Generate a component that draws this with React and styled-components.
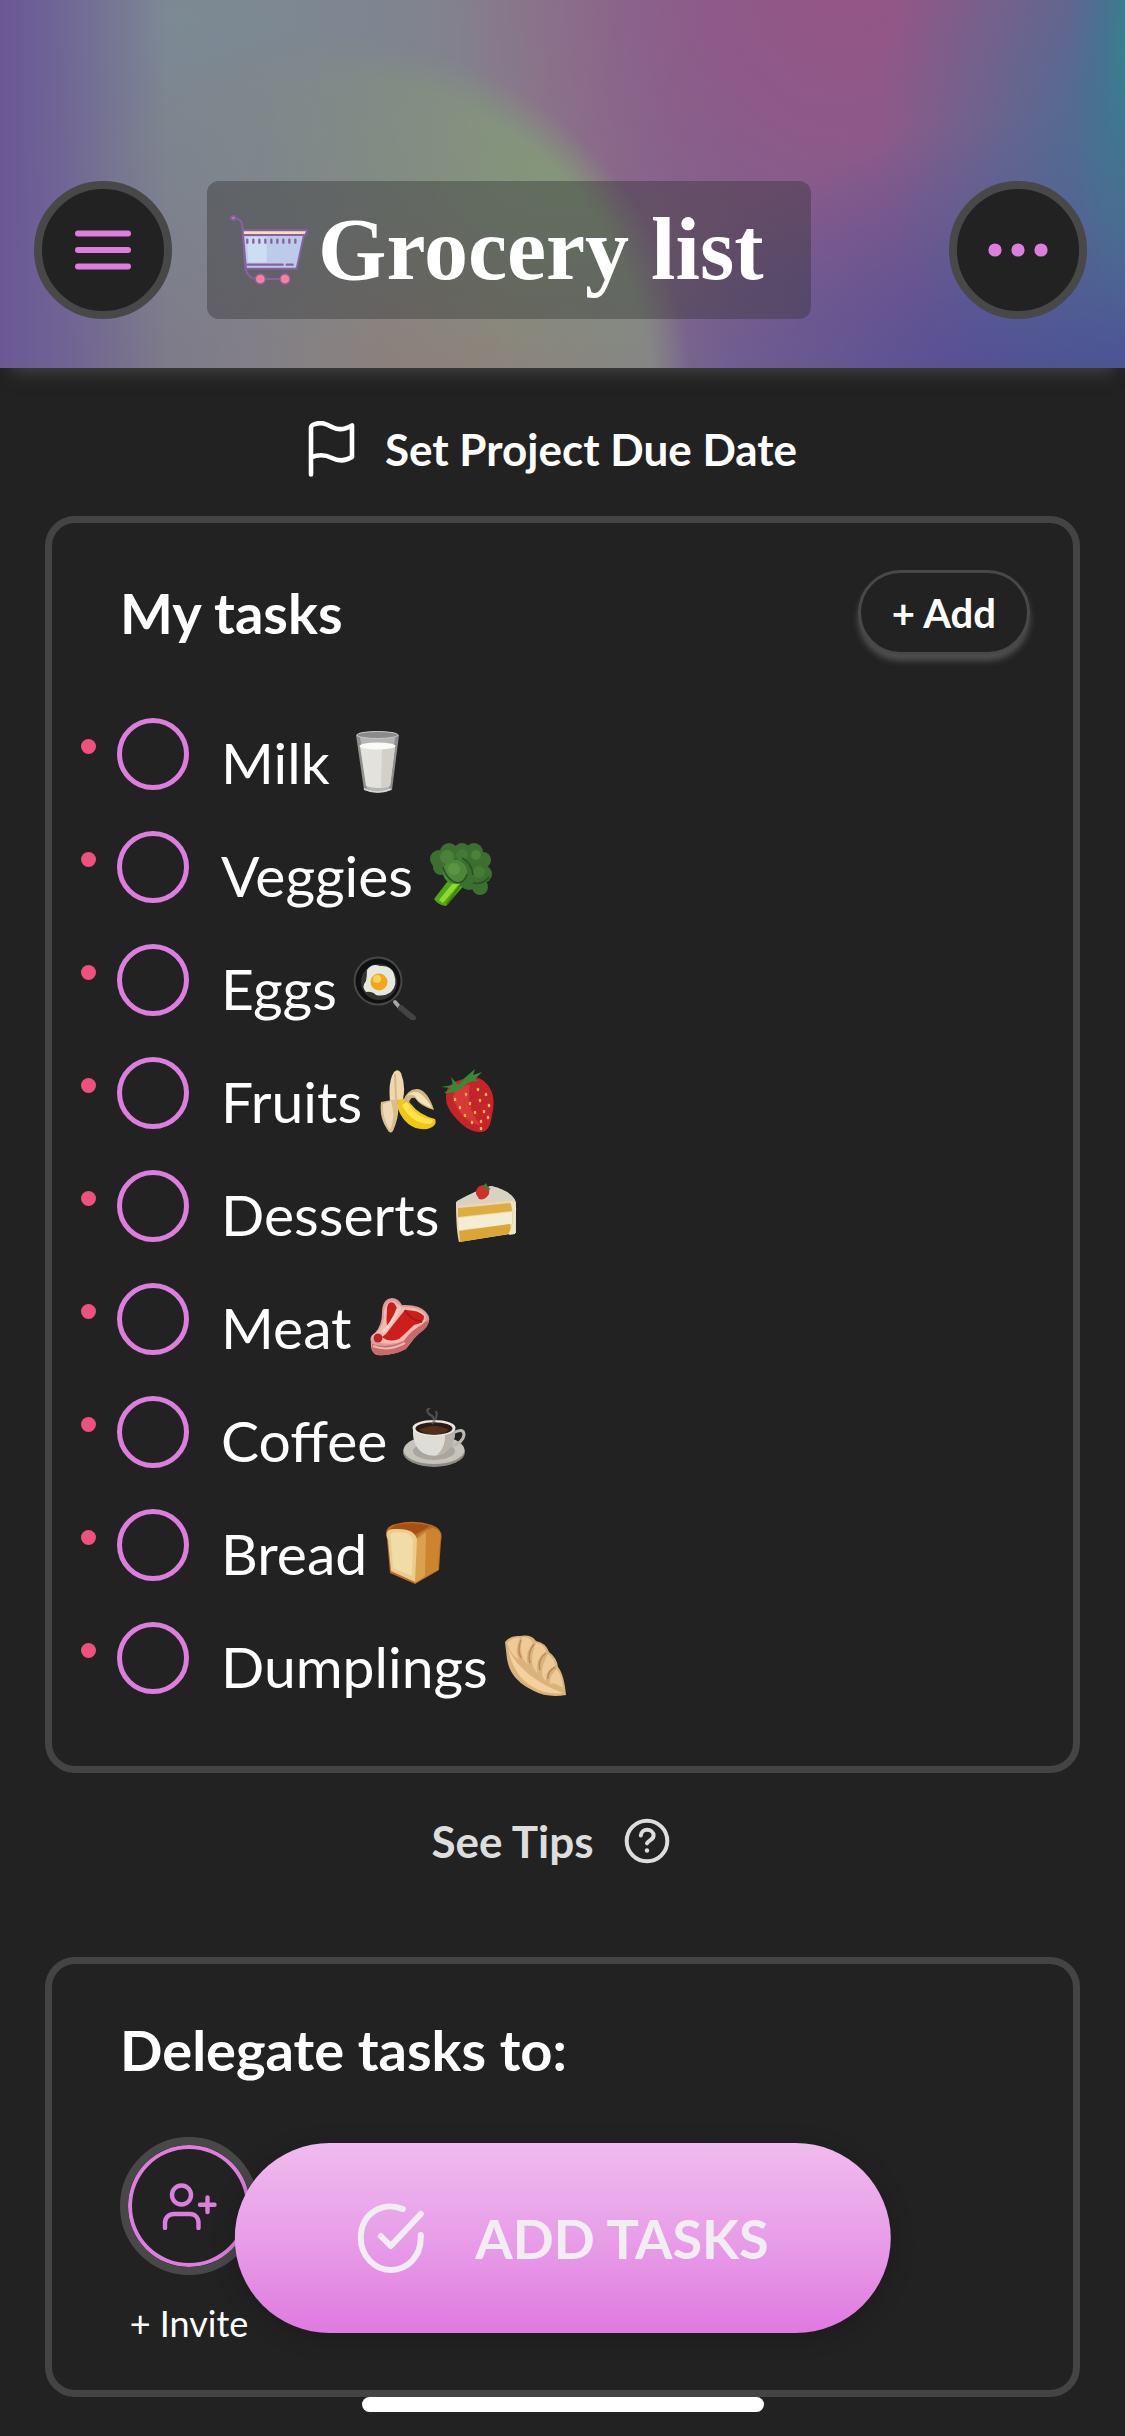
import React, { useState } from "react";
import styled, { createGlobalStyle } from "styled-components";

const GlobalStyle = createGlobalStyle`
  * {
    box-sizing: border-box;
  }
  body {
    margin: 0;
    background-color: #222222;
    color: #ffffff;
    font-family: Lato, "Open Sans", sans-serif;
  }
  h1, h2, ul {
    margin: 0;
    padding: 0;
  }
  button {
    font-family: inherit;
    color: inherit;
    cursor: pointer;
  }
`;
const Page = styled.div`
  min-height: 100vh;
  padding-bottom: 38px;
`;
const Header = styled.header`
  position: relative;
  display: flex;
  align-items: center;
  padding: 181px 38px 49px 34px;
  background-color: #7b6c90;
  background-image:
    linear-gradient(90deg, #6a5896 0%, rgba(108, 92, 150, 0.85) 4%, rgba(108, 96, 148, 0) 15%),
    radial-gradient(ellipse 5% 75% at 100% 12%, #38808e 0%, rgba(60, 120, 144, 0.6) 40%, rgba(76, 112, 146, 0) 100%),
    radial-gradient(ellipse 22% 90% at 100% 35%, rgba(70, 112, 146, 0.9) 0%, rgba(84, 106, 146, 0) 100%),
    radial-gradient(ellipse 45% 75% at 100% 105%, #4d4896 0%, rgba(88, 82, 146, 0) 100%),
    radial-gradient(ellipse 36% 120% at 76% -5%, #955585 0%, rgba(146, 88, 136, 0.85) 35%, rgba(140, 95, 140, 0) 100%),
    radial-gradient(ellipse 45% 90% at 16% 5%, #7c8a94 0%, rgba(128, 136, 144, 0) 100%),
    linear-gradient(90deg, #7a748e 0%, #80808a 28%, #8c7888 48%, #76648f 66%, #625f92 100%);
  box-shadow: 0 16px 16px -12px #444444;
`;
const Orb = styled.div`
  position: absolute;
  inset: 0;
  background-image:
    radial-gradient(ellipse 34% 60% at 50% 46%, #84967a 0%, rgba(132, 148, 124, 0) 100%),
    radial-gradient(ellipse 22% 45% at 36% 100%, #918274 0%, rgba(140, 132, 122, 0) 100%),
    linear-gradient(#82888a, #858486);
  mask-image: radial-gradient(circle at 29% 400px, #000000 325px, rgba(0, 0, 0, 0.5) 346px, transparent 366px),
    linear-gradient(78deg, transparent 8%, rgba(0, 0, 0, 0.4) 25%, #000000 44%);
  mask-composite: intersect;
`;
const RoundButton = styled.button`
  position: relative;
  display: flex;
  justify-content: center;
  align-items: center;
  flex: none;
  width: 138px;
  height: 138px;
  padding: 0;
  border: 8px solid #484848;
  border-radius: 50%;
  background-color: #222222;
  margin-left: ${(props) => (props.$end ? "auto" : "0")};
`;
const TitleBox = styled.div`
  position: relative;
  display: flex;
  align-items: center;
  gap: 10px;
  height: 138px;
  margin-left: 35px;
  padding: 0 47px 0 23px;
  border-radius: 12px;
  background-color: rgba(50, 50, 50, 0.4);
`;
const Title = styled.h1`
  font-family: "Liberation Serif", serif;
  font-size: 88px;
  font-weight: 700;
  line-height: 100px;
  white-space: nowrap;
`;
const LinkButton = styled.button`
  display: flex;
  justify-content: center;
  align-items: center;
  gap: 30px;
  width: 100%;
  height: ${(props) => props.$height};
  padding: ${(props) => props.$padding};
  border: none;
  background: none;
  color: ${(props) => props.$color};
  font-size: 44px;
  font-weight: 700;
`;
const Card = styled.section`
  margin: 0 45px;
  padding: ${(props) => props.$padding};
  border: 7px solid #444444;
  border-radius: 30px;
`;
const CardHeader = styled.div`
  display: flex;
  justify-content: space-between;
  align-items: center;
  padding: 0 43px 63px 68px;
`;
const CardTitle = styled.h2`
  font-size: 56px;
  font-weight: 700;
  line-height: 60px;
`;
const AddButton = styled.button`
  height: 85px;
  padding: 0 31px;
  border: 3px solid #484848;
  border-radius: 43px;
  background-color: #222222;
  box-shadow: 0 6px 6px #505050;
  font-size: 40px;
  font-weight: 700;
`;
const TaskList = styled.ul`
  list-style: none;
`;
const TaskRow = styled.li`
  display: flex;
  align-items: flex-start;
  height: 113px;
  padding-left: 29px;
`;
const Dot = styled.span`
  width: 15px;
  height: 15px;
  margin: 21px 21px 0 0;
  border-radius: 50%;
  background-color: #f0507e;
`;
const Check = styled.input`
  appearance: none;
  width: 72px;
  height: 72px;
  margin: 0 32px 0 0;
  border: 5px solid #dd7ddd;
  border-radius: 50%;
  cursor: pointer;
  &:checked {
    background-color: #dd7ddd;
  }
`;
const TaskLabel = styled.label`
  display: flex;
  align-items: center;
  gap: 16px;
  height: 72px;
  margin-top: 8px;
  font-size: 57px;
`;
const Emojis = styled.span`
  display: flex;
`;
const Person = styled.div`
  display: flex;
  flex-direction: column;
  align-items: center;
  gap: 28px;
  width: 138px;
  margin-top: 57px;
  font-size: 36px;
  line-height: 40px;
`;
const InviteButton = styled(RoundButton)`
  box-shadow: inset 0 0 0 4px #dd7ddd;
`;
const AddTasks = styled.button`
  position: fixed;
  bottom: 103px;
  left: 50%;
  transform: translateX(-50%);
  display: flex;
  align-items: center;
  gap: 51px;
  height: 190px;
  padding: 0 122px;
  border: none;
  border-radius: 95px;
  background-image: linear-gradient(#efbbee, #e89ee8 50%, #df7ae0);
  box-shadow: 0 4px 24px rgba(0, 0, 0, 0.2);
  color: #f0eef0;
  font-size: 54px;
  font-weight: 700;
  white-space: nowrap;
`;
const HomeBar = styled.div`
  position: fixed;
  bottom: 24px;
  left: 50%;
  transform: translateX(-50%);
  width: 402px;
  height: 15px;
  border-radius: 8px;
  background-color: #ffffff;
`;

const MenuIcon = () => (
  <svg width="56" height="40" viewBox="0 0 56 40" stroke="#dd7ddd" strokeWidth="6" strokeLinecap="round">
    <path d="M3 3.500h50M3 20h50M3 36.500h50" />
  </svg>
);
const MoreIcon = () => (
  <svg width="60" height="14" viewBox="0 0 60 14" fill="#dd7ddd">
    <circle cx="7" cy="7" r="6.600" />
    <circle cx="30" cy="7" r="6.600" />
    <circle cx="53" cy="7" r="6.600" />
  </svg>
);
const FlagIcon = () => (
  <svg width="47" height="56" viewBox="0 0 47 56" fill="none" stroke="#ffffff" strokeWidth="4.600" strokeLinecap="round" strokeLinejoin="round">
    <path d="M3 53.500V7C3 5 4 4 6 3.400C15 0 20 4 25 6.500C31 9.500 37 8.500 44 4.500V36C36 41 30 40 24 37C18 34 12 32.500 3 36.500" />
  </svg>
);
const HelpIcon = () => (
  <svg width="46" height="46" viewBox="0 0 46 46" fill="none" stroke="#dddddd" strokeWidth="4" strokeLinecap="round">
    <circle cx="23" cy="23" r="20.300" />
    <path d="M16.800 17.500C17.200 13.800 20 11.800 23 11.800C26.600 11.800 29.600 14.200 29.600 17.500C29.600 21.800 25 21.800 23 25.300" />
    <circle cx="23" cy="32.500" r="2.200" fill="#dddddd" stroke="none" />
  </svg>
);
const UserPlusIcon = () => (
  <svg width="56" height="48" viewBox="0 0 56 48" fill="none" stroke="#dd7ddd" strokeWidth="4.400" strokeLinecap="round">
    <circle cx="20.500" cy="13" r="9.500" />
    <path d="M4 46V41C4 35.500 8 32 13 32H29C34 32 37.500 35.500 37.500 41V46M46.500 15.500V30M39 22.700H53.500" />
  </svg>
);
const CheckCircleIcon = () => (
  <svg width="68" height="72" viewBox="0 0 68 72" fill="none" stroke="#f0eef0" strokeWidth="6" strokeLinecap="round" strokeLinejoin="round">
    <path d="M46 7C28 -1 4 10 4 36C4 54 18 68 34 68C51 68 64 54 64 36V33M24 34L34 44L64 12" />
  </svg>
);
const CartIcon = () => (
  <svg width="78" height="72" viewBox="90 130 234 214" fill="none" stroke="#87629f" strokeWidth="6" strokeLinejoin="round" role="img" aria-label="shopping cart">
    <path d="M102 141C122 142 127 154 128 176L136 292C140 312 154 324 170 324H254" />
    <path d="M129 192L138 293H290L312 192Z" fill="#bccbea" />
    <path d="M140 198L145 274H200V198Z" fill="#cdddf3" stroke="none" />
    <path d="M128 178H322L316 192H129Z" fill="#fbdcc0" />
    <path d="M142 206v9M160 206v9M178 206v9M196 206v9M214 206v9M232 206v9M250 206v9M268 206v9M286 206v9M142 281h106M260 281h18" strokeWidth="7" strokeLinecap="round" />
    <circle cx="100" cy="141" r="6" fill="#e878b4" />
    <circle cx="181" cy="324" r="15" fill="#ff7d9a" strokeWidth="4" />
    <circle cx="255" cy="324" r="15" fill="#ff7d9a" strokeWidth="4" />
  </svg>
);

const drawings = {
  milk: (
    <>
      <path d="M10 5L18 60Q32 66 46 60L53 5Q32 -1 10 5Z" fill="#8f8f90" />
      <path d="M14 7L21 59Q32 63 43 59L49 7Z" fill="#b5b5b5" />
      <path d="M14 16L20 56Q32 60 44 56L49 16Z" fill="#e4e2dc" />
      <path d="M36 18L35 57Q40 57 44 56L49 17Z" fill="#d3d0c9" />
      <ellipse cx="31.500" cy="16" rx="18" ry="3.500" fill="#fafaf7" />
      <ellipse cx="31.500" cy="5" rx="20.500" ry="3.500" fill="#8b8b8d" stroke="#c9c9c9" />
      <path d="M18 59Q32 65 45 59" stroke="#d8d8d8" strokeWidth="1.500" fill="none" />
    </>
  ),
  broccoli: (
    <>
      <path d="M22 34L5 56Q9 62 17 63L38 39L44 30Z" fill="#56a417" />
      <path d="M24 40L10 57L14 60L31 40Z" fill="#8ddb2c" />
      <path d="M33 40L18 61" stroke="#3d8014" strokeWidth="2" />
      <g fill="#3d6f30">
        <circle cx="10" cy="16" r="9" />
        <circle cx="20" cy="9" r="9" />
        <circle cx="33" cy="8" r="8" />
        <circle cx="45" cy="9" r="9" />
        <circle cx="54" cy="17" r="8" />
        <circle cx="54" cy="31" r="9" />
        <circle cx="51" cy="44" r="8" />
        <circle cx="40" cy="37" r="10" />
        <circle cx="12" cy="24" r="8" />
        <circle cx="32" cy="20" r="12" />
      </g>
      <circle cx="44" cy="20" r="11" fill="#3c6e2e" />
      <circle cx="26" cy="29" r="12" fill="#4d883a" />
      <circle cx="18" cy="14" r="7" fill="#4b8239" />
      <circle cx="33" cy="12" r="6" fill="#447935" />
      <circle cx="50" cy="29" r="6" fill="#457b36" />
      <circle cx="47" cy="12" r="5" fill="#4b8239" />
      <circle cx="25" cy="26" r="6" fill="#5a9546" />
      <path d="M14 24Q18 38 29 40Q36 39 38 31M33 15Q43 20 44 32M44 40Q54 42 60 34" stroke="#28511f" strokeWidth="1.500" fill="none" />
    </>
  ),
  egg: (
    <>
      <path d="M42 46L48 53" stroke="#a7a7a7" strokeWidth="4" strokeLinecap="round" />
      <path d="M48 52L60 62" stroke="#434345" strokeWidth="6" strokeLinecap="round" />
      <circle cx="25" cy="25" r="24.500" fill="#474747" />
      <circle cx="25" cy="25" r="22.500" fill="#101010" />
      <circle cx="26" cy="26" r="18" fill="#333333" />
      <path d="M14 14Q19 7 27 10Q38 9 41 18Q45 29 38 36Q31 41 23 39Q19 35 13 36Q8 31 13 25Q14 20 14 14Z" fill="#e4e9df" />
      <circle cx="26" cy="26" r="8.500" fill="#f2a61c" />
      <circle cx="24" cy="23" r="4" fill="#ffd15a" />
    </>
  ),
  banana: (
    <>
      <path d="M19 31Q25 27 32 34Q41 46 57 50Q60 57 49 60Q29 62 20 40Z" fill="#efc817" />
      <path d="M29 33Q39 49 55 51L53 55Q33 55 24 36Z" fill="#ffe34a" />
      <path d="M12 32Q10 12 16 3Q20 -1 23 4Q28 17 25 30Z" fill="#eed8b2" />
      <path d="M17 5L18 30" stroke="#d9b887" strokeWidth="2" />
      <path d="M3 33L19 30Q23 44 15 62Q12 66 9 60Q1 48 3 33Z" fill="#d9bd8d" />
      <path d="M5 35L13 32Q18 47 12 61Q4 49 5 35Z" fill="#edd9b4" />
      <path d="M25 32Q30 19 40 20Q50 22 56 41Q42 37 37 29Q32 28 31 34Z" fill="#d4b681" />
      <path d="M27 28Q36 20 43 25Q50 31 54 39Q41 35 37 27Q32 24 27 28Z" fill="#f3e3b7" />
    </>
  ),
  strawberry: (
    <>
      <path d="M5 29Q4 15 19 11Q35 4 45 14Q56 25 51 46Q49 63 40 63Q27 64 13 47Q5 38 5 29Z" fill="#c52429" />
      <path d="M12 28Q15 15 29 16Q24 38 40 57Q18 51 12 28Z" fill="#e5433d" opacity=".65" />
      <path d="M17 16Q24 8 34 0L32 6L41 3L34 10L38 12Q27 11 21 19Q14 25 3 24L10 19L0 18L12 16L10 8Z" fill="#348b35" />
      <g stroke="#efb854" strokeWidth="2.500" strokeLinecap="round">
        <path d="M14 30l0 1M25 25l0 1M37 20l0 1M45 25l0 1M19 38l0 1M29 34l0 1M39 31l0 1M48 36l0 1M24 46l0 1M34 43l0 1M43 42l0 1M31 53l0 1M40 52l0 1M47 48l0 1M40 59l0 1" />
      </g>
    </>
  ),
  cake: (
    <>
      <path d="M1 20Q22 8 36 4Q57 9 61 20V51L4 60Q1 48 1 20Z" fill="#e8d9b6" />
      <path d="M2 19Q22 8 36 4Q55 9 60 18L2 24Z" fill="#d8d2c0" />
      <path d="M3 26Q30 24 56 21L57 29L3 35Z" fill="#e0ac3d" />
      <path d="M3 36L57 30V42L4 48Z" fill="#f5ecd4" />
      <path d="M4 49L55 42Q57 47 53 52L5 60Z" fill="#dca634" />
      <path d="M55 19Q62 20 61 30L60 52L54 53L58 41V28Z" fill="#efe4c8" />
      <path d="M21 12Q20 5 28 3Q36 4 34 12Q30 19 24 17Z" fill="#d12f2b" />
      <path d="M28 4L31 1L33 5L36 7L31 8Z" fill="#467a32" />
    </>
  ),
  meat: (
    <>
      <path d="M3 47Q1 41 7 38Q14 30 14 18Q14 4 24 3Q30 3 34 10Q51 9 58 17Q66 26 54 35Q45 44 38 54Q25 61 9 60Q2 58 3 47Z" fill="#dc9b96" />
      <path d="M4 49Q20 54 36 46Q45 32 61 25Q61 32 52 38Q43 45 38 54Q25 61 9 60Q3 57 4 49Z" fill="#c76a69" />
      <path d="M5 45Q2 40 9 37Q17 29 16 16Q18 5 26 6L34 12Q51 12 57 19Q61 26 50 32Q41 38 35 46Q20 52 5 45Z" fill="#edbbb4" />
      <path d="M19 15Q19 5 26 8Q32 15 26 23L19 32Q18 24 19 15ZM18 39Q31 22 37 15Q51 15 56 21Q57 28 46 30Q38 38 31 44Q21 48 14 42Z" fill="#cf1d1c" />
      <path d="M37 15Q41 24 54 27" stroke="#a7191d" strokeWidth="2" fill="none" />
      <circle cx="10" cy="43" r="4.500" fill="#bf2223" />
      <path d="M15 37Q24 29 30 14" stroke="#f6d2c8" strokeWidth="3" fill="none" />
      <path d="M5 51Q20 57 37 48" stroke="#eeb5af" strokeWidth="2" fill="none" />
    </>
  ),
  coffee: (
    <>
      <ellipse cx="31" cy="44" rx="31" ry="15" fill="#8e8b85" />
      <ellipse cx="31" cy="42" rx="30.500" ry="14" fill="#c6c3bb" />
      <ellipse cx="31" cy="43" rx="21" ry="9" fill="#aaa69e" />
      <path d="M50 25Q61 19 61 27Q60 35 48 38" stroke="#bbb8b1" strokeWidth="3" fill="none" />
      <path d="M10 21Q9 38 20 45Q31 51 42 44Q53 36 52 21Z" fill="#dfddd7" />
      <path d="M42 26Q43 39 34 47Q53 43 52 21Z" fill="#b7b3ab" />
      <ellipse cx="31" cy="20" rx="21.500" ry="8" fill="#ece9e3" />
      <ellipse cx="31" cy="20.500" rx="18.500" ry="6.200" fill="#2d1a12" />
      <path d="M16 22Q31 14 46 22Q31 31 16 22Z" fill="#51301d" />
      <path d="M29 16Q34 10 26 6Q22 2 27 0M31 14Q35 8 33 3" stroke="#666666" strokeWidth="2" fill="none" opacity=".7" />
    </>
  ),
  bread: (
    <>
      <path d="M4 18Q0 5 13 3Q31 -2 49 4Q61 8 58 20L56 49L32 63L7 52Z" fill="#ba6a25" />
      <path d="M13 4Q31 0 47 5L31 14L7 8Z" fill="#a64f17" />
      <path d="M33 20Q34 11 50 7Q60 9 57 20L55 49L32 62Z" fill="#cd842f" />
      <path d="M43 11L42 55L32 62V20Z" fill="#dba14e" />
      <path d="M5 19Q0 7 13 8Q31 7 34 18L32 61L8 50Z" fill="#e9cd8d" />
      <path d="M8 18Q5 11 14 11Q29 11 30 20L29 55L10 47Z" fill="#f1dca7" />
    </>
  ),
  dumpling: (
    <>
      <path d="M1 8Q7 1 16 2Q27 0 32 7Q42 9 45 18Q53 24 54 33Q60 40 62 61Q43 64 30 57Q6 46 3 25Z" fill="#dab27b" />
      <path d="M4 15Q19 44 59 59Q42 61 29 53Q10 43 4 15Z" fill="#f2d19c" />
      <path d="M3 9Q9 3 16 4Q10 17 15 25Q8 23 3 9ZM18 3Q27 3 29 9Q20 20 24 31Q14 22 18 3ZM32 9Q40 10 42 17Q30 26 34 39Q23 31 32 9ZM44 20Q51 25 51 32Q41 36 42 47Q33 40 44 20ZM53 35Q58 42 59 54Q51 48 46 50Q44 43 53 35Z" fill="#eecb96" />
      <path d="M17 6Q13 17 17 24M30 10Q23 19 26 29M42 19Q33 26 36 36M51 33Q43 38 44 45" stroke="#b98d5c" strokeWidth="1.500" fill="none" />
    </>
  ),
};
const Emoji = ({ name }) => (
  <svg width="63" height="64" viewBox="0 0 63 64" role="img" aria-label={name}>
    {drawings[name]}
  </svg>
);

const tasks = [
  { name: "Milk", emojis: ["milk"] },
  { name: "Veggies", emojis: ["broccoli"] },
  { name: "Eggs", emojis: ["egg"] },
  { name: "Fruits", emojis: ["banana", "strawberry"] },
  { name: "Desserts", emojis: ["cake"] },
  { name: "Meat", emojis: ["meat"] },
  { name: "Coffee", emojis: ["coffee"] },
  { name: "Bread", emojis: ["bread"] },
  { name: "Dumplings", emojis: ["dumpling"] },
];

const App = () => {
  const [done, setDone] = useState([]);
  const toggle = (name) => {
    setDone(done.includes(name) ? done.filter((n) => n !== name) : [...done, name]);
  };
  return (
    <Page>
      <GlobalStyle />
      <Header>
        <Orb />
        <RoundButton aria-label="Menu">
          <MenuIcon />
        </RoundButton>
        <TitleBox>
          <CartIcon />
          <Title>Grocery list</Title>
        </TitleBox>
        <RoundButton $end aria-label="More">
          <MoreIcon />
        </RoundButton>
      </Header>
      <LinkButton $height="148px" $padding="13px 20px 0 0" $color="#ffffff">
        <FlagIcon />
        Set Project Due Date
      </LinkButton>
      <Card $padding="47px 0 31px">
        <CardHeader>
          <CardTitle>My tasks</CardTitle>
          <AddButton>+ Add</AddButton>
        </CardHeader>
        <TaskList>
          {tasks.map((task) => (
            <TaskRow key={task.name}>
              <Dot />
              <Check
                type="checkbox"
                id={task.name}
                checked={done.includes(task.name)}
                onChange={() => toggle(task.name)}
              />
              <TaskLabel htmlFor={task.name}>
                {task.name}
                <Emojis>
                  {task.emojis.map((emoji) => (
                    <Emoji name={emoji} key={emoji} />
                  ))}
                </Emojis>
              </TaskLabel>
            </TaskRow>
          ))}
        </TaskList>
      </Card>
      <LinkButton $height="184px" $padding="0 24px 48px 0" $color="#dddddd">
        See Tips
        <HelpIcon />
      </LinkButton>
      <Card $padding="56px 68px 47px">
        <CardTitle>Delegate tasks to:</CardTitle>
        <Person>
          <InviteButton aria-label="Invite">
            <UserPlusIcon />
          </InviteButton>
          + Invite
        </Person>
      </Card>
      <AddTasks>
        <CheckCircleIcon />
        ADD TASKS
      </AddTasks>
      <HomeBar />
    </Page>
  );
};
export default App;
